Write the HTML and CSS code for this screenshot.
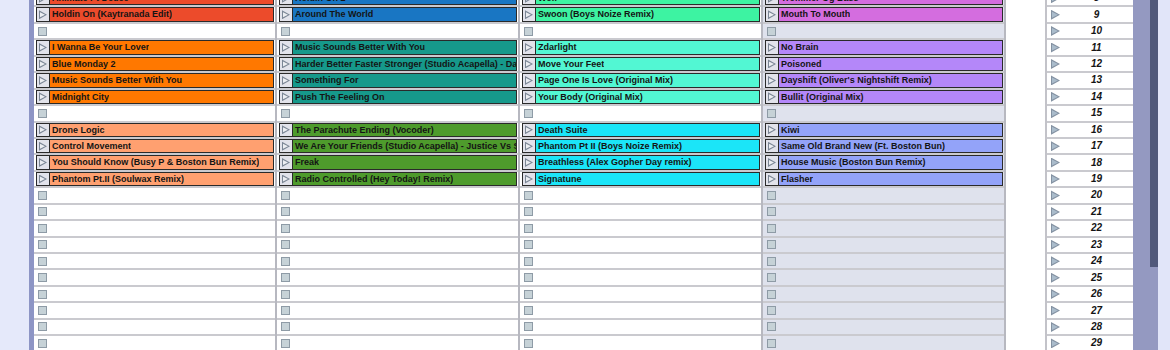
FILE: index.html
```html
<!DOCTYPE html>
<html>
<head>
    <title>Session View</title>
    <link rel="stylesheet" href="styles.css">
</head>
<body>
    <div class="strip"></div>

    <div class="session">
        <!-- track 1 -->
        <div class="track">
            <div class="slot"><div class="clip c-red"><span class="play"></span><span class="name">Animate Pt Deuce</span></div></div>
            <div class="slot"><div class="clip c-red"><span class="play"></span><span class="name">Holdin On (Kaytranada Edit)</span></div></div>
            <div class="slot"><span class="stop"></span></div>
            <div class="slot"><div class="clip c-orange"><span class="play"></span><span class="name">I Wanna Be Your Lover</span></div></div>
            <div class="slot"><div class="clip c-orange"><span class="play"></span><span class="name">Blue Monday 2</span></div></div>
            <div class="slot"><div class="clip c-orange"><span class="play"></span><span class="name">Music Sounds Better With You</span></div></div>
            <div class="slot"><div class="clip c-orange"><span class="play"></span><span class="name">Midnight City</span></div></div>
            <div class="slot"><span class="stop"></span></div>
            <div class="slot"><div class="clip c-salmon"><span class="play"></span><span class="name">Drone Logic</span></div></div>
            <div class="slot"><div class="clip c-salmon"><span class="play"></span><span class="name">Control Movement</span></div></div>
            <div class="slot"><div class="clip c-salmon"><span class="play"></span><span class="name">You Should Know (Busy P &amp; Boston Bun Remix)</span></div></div>
            <div class="slot"><div class="clip c-salmon"><span class="play"></span><span class="name">Phantom Pt.II (Soulwax Remix)</span></div></div>
            <div class="slot"><span class="stop"></span></div>
            <div class="slot"><span class="stop"></span></div>
            <div class="slot"><span class="stop"></span></div>
            <div class="slot"><span class="stop"></span></div>
            <div class="slot"><span class="stop"></span></div>
            <div class="slot"><span class="stop"></span></div>
            <div class="slot"><span class="stop"></span></div>
            <div class="slot"><span class="stop"></span></div>
            <div class="slot"><span class="stop"></span></div>
            <div class="slot"><span class="stop"></span></div>
        </div>

        <!-- track 2 -->
        <div class="track">
            <div class="slot"><div class="clip c-blue"><span class="play"></span><span class="name">Holdin On 2</span></div></div>
            <div class="slot"><div class="clip c-blue"><span class="play"></span><span class="name">Around The World</span></div></div>
            <div class="slot"><span class="stop"></span></div>
            <div class="slot"><div class="clip c-teal"><span class="play"></span><span class="name">Music Sounds Better With You</span></div></div>
            <div class="slot"><div class="clip c-teal"><span class="play"></span><span class="name">Harder Better Faster Stronger (Studio Acapella) - Daft Punk</span></div></div>
            <div class="slot"><div class="clip c-teal"><span class="play"></span><span class="name">Something For</span></div></div>
            <div class="slot"><div class="clip c-teal"><span class="play"></span><span class="name">Push The Feeling On</span></div></div>
            <div class="slot"><span class="stop"></span></div>
            <div class="slot"><div class="clip c-green"><span class="play"></span><span class="name">The Parachute Ending (Vocoder)</span></div></div>
            <div class="slot"><div class="clip c-green"><span class="play"></span><span class="name">We Are Your Friends (Studio Acapella) - Justice Vs Simian</span></div></div>
            <div class="slot"><div class="clip c-green"><span class="play"></span><span class="name">Freak</span></div></div>
            <div class="slot"><div class="clip c-green"><span class="play"></span><span class="name">Radio Controlled (Hey Today! Remix)</span></div></div>
            <div class="slot"><span class="stop"></span></div>
            <div class="slot"><span class="stop"></span></div>
            <div class="slot"><span class="stop"></span></div>
            <div class="slot"><span class="stop"></span></div>
            <div class="slot"><span class="stop"></span></div>
            <div class="slot"><span class="stop"></span></div>
            <div class="slot"><span class="stop"></span></div>
            <div class="slot"><span class="stop"></span></div>
            <div class="slot"><span class="stop"></span></div>
            <div class="slot"><span class="stop"></span></div>
        </div>

        <!-- track 3 -->
        <div class="track">
            <div class="slot"><div class="clip c-mint"><span class="play"></span><span class="name">Wolf</span></div></div>
            <div class="slot"><div class="clip c-mint"><span class="play"></span><span class="name">Swoon (Boys Noize Remix)</span></div></div>
            <div class="slot"><span class="stop"></span></div>
            <div class="slot"><div class="clip c-aqua"><span class="play"></span><span class="name">Zdarlight</span></div></div>
            <div class="slot"><div class="clip c-aqua"><span class="play"></span><span class="name">Move Your Feet</span></div></div>
            <div class="slot"><div class="clip c-aqua"><span class="play"></span><span class="name">Page One Is Love (Original Mix)</span></div></div>
            <div class="slot"><div class="clip c-aqua"><span class="play"></span><span class="name">Your Body (Original Mix)</span></div></div>
            <div class="slot"><span class="stop"></span></div>
            <div class="slot"><div class="clip c-cyan"><span class="play"></span><span class="name">Death Suite</span></div></div>
            <div class="slot"><div class="clip c-cyan"><span class="play"></span><span class="name">Phantom Pt II (Boys Noize Remix)</span></div></div>
            <div class="slot"><div class="clip c-cyan"><span class="play"></span><span class="name">Breathless (Alex Gopher Day remix)</span></div></div>
            <div class="slot"><div class="clip c-cyan"><span class="play"></span><span class="name">Signatune</span></div></div>
            <div class="slot"><span class="stop"></span></div>
            <div class="slot"><span class="stop"></span></div>
            <div class="slot"><span class="stop"></span></div>
            <div class="slot"><span class="stop"></span></div>
            <div class="slot"><span class="stop"></span></div>
            <div class="slot"><span class="stop"></span></div>
            <div class="slot"><span class="stop"></span></div>
            <div class="slot"><span class="stop"></span></div>
            <div class="slot"><span class="stop"></span></div>
            <div class="slot"><span class="stop"></span></div>
        </div>

        <!-- track 4 -->
        <div class="track dim">
            <div class="slot"><div class="clip c-pink"><span class="play"></span><span class="name">Trommer Og Bass</span></div></div>
            <div class="slot"><div class="clip c-pink"><span class="play"></span><span class="name">Mouth To Mouth</span></div></div>
            <div class="slot"><span class="stop"></span></div>
            <div class="slot"><div class="clip c-violet"><span class="play"></span><span class="name">No Brain</span></div></div>
            <div class="slot"><div class="clip c-violet"><span class="play"></span><span class="name">Poisoned</span></div></div>
            <div class="slot"><div class="clip c-violet"><span class="play"></span><span class="name">Dayshift (Oliver's Nightshift Remix)</span></div></div>
            <div class="slot"><div class="clip c-violet"><span class="play"></span><span class="name">Bullit (Original Mix)</span></div></div>
            <div class="slot"><span class="stop"></span></div>
            <div class="slot"><div class="clip c-peri"><span class="play"></span><span class="name">Kiwi</span></div></div>
            <div class="slot"><div class="clip c-peri"><span class="play"></span><span class="name">Same Old Brand New (Ft. Boston Bun)</span></div></div>
            <div class="slot"><div class="clip c-peri"><span class="play"></span><span class="name">House Music (Boston Bun Remix)</span></div></div>
            <div class="slot"><div class="clip c-peri"><span class="play"></span><span class="name">Flasher</span></div></div>
            <div class="slot"><span class="stop"></span></div>
            <div class="slot"><span class="stop"></span></div>
            <div class="slot"><span class="stop"></span></div>
            <div class="slot"><span class="stop"></span></div>
            <div class="slot"><span class="stop"></span></div>
            <div class="slot"><span class="stop"></span></div>
            <div class="slot"><span class="stop"></span></div>
            <div class="slot"><span class="stop"></span></div>
            <div class="slot"><span class="stop"></span></div>
            <div class="slot"><span class="stop"></span></div>
        </div>

        <div class="gap"></div>

        <!-- master / scenes -->
        <div class="master">
            <div class="scene"><span class="launch"></span><span class="num">8</span></div>
            <div class="scene"><span class="launch"></span><span class="num">9</span></div>
            <div class="scene"><span class="launch"></span><span class="num">10</span></div>
            <div class="scene"><span class="launch"></span><span class="num">11</span></div>
            <div class="scene"><span class="launch"></span><span class="num">12</span></div>
            <div class="scene"><span class="launch"></span><span class="num">13</span></div>
            <div class="scene"><span class="launch"></span><span class="num">14</span></div>
            <div class="scene"><span class="launch"></span><span class="num">15</span></div>
            <div class="scene"><span class="launch"></span><span class="num">16</span></div>
            <div class="scene"><span class="launch"></span><span class="num">17</span></div>
            <div class="scene"><span class="launch"></span><span class="num">18</span></div>
            <div class="scene"><span class="launch"></span><span class="num">19</span></div>
            <div class="scene"><span class="launch"></span><span class="num">20</span></div>
            <div class="scene"><span class="launch"></span><span class="num">21</span></div>
            <div class="scene"><span class="launch"></span><span class="num">22</span></div>
            <div class="scene"><span class="launch"></span><span class="num">23</span></div>
            <div class="scene"><span class="launch"></span><span class="num">24</span></div>
            <div class="scene"><span class="launch"></span><span class="num">25</span></div>
            <div class="scene"><span class="launch"></span><span class="num">26</span></div>
            <div class="scene"><span class="launch"></span><span class="num">27</span></div>
            <div class="scene"><span class="launch"></span><span class="num">28</span></div>
            <div class="scene"><span class="launch"></span><span class="num">29</span></div>
        </div>
    </div>

    <div class="scrollbar"><div class="thumb"></div></div>
    <div class="edge"></div>
</body>
</html>
```

FILE: styles.css
```css
body {
    margin: 0;
    width: 1170px;
    height: 350px;
    overflow: hidden;
    display: flex;
    background-color: #ffffff;
    font-family: "Liberation Sans", Arial, sans-serif;
    color: #141414;
}

.strip {
    flex: none;
    width: 29px;
    background-color: #e5e9fa;
    border-right: 5px solid #8d95c5;
}

.session {
    flex: none;
    display: flex;
    align-self: flex-start;
    margin-top: -9px;
}

.track {
    width: 241px;
    border-right: 2px solid #b7b8c0;
    background-color: #ffffff;
}
.track.dim {
    background-color: #dfe2ed;
}

.slot {
    height: 16.45px;
    box-sizing: border-box;
    border-bottom: 2px solid #cacacf;
    padding: 0 1px 0 2px;
    display: flex;
    align-items: center;
}

.stop {
    width: 9px;
    height: 9px;
    box-sizing: border-box;
    margin-left: 2px;
    border: 1px solid #8e9ba6;
    background-color: #c6d2d7;
}

.clip {
    flex: 1;
    min-width: 0;
    height: 100%;
    box-sizing: border-box;
    border: 1px solid #2a2a2a;
    display: flex;
}

.play {
    flex: none;
    width: 12px;
    background-color: #e2e3eb;
    border-right: 1px solid #2a2a2a;
    display: grid;
    place-items: center;
}
.play::before,
.play::after {
    content: "";
    grid-area: 1 / 1;
    width: 8px;
    height: 9px;
}
.play::before {
    background-color: #7b8695;
    clip-path: polygon(0 0, 100% 50%, 0 100%);
}
.play::after {
    background-color: #eceef2;
    clip-path: polygon(1px 2px, 6px 4.5px, 1px 7px);
}

.name {
    padding-left: 2px;
    font-size: 9px;
    font-weight: bold;
    line-height: 12px;
    white-space: nowrap;
    overflow: hidden;
}

.c-red { background-color: #ec4b2b; }
.c-orange { background-color: #ff7800; }
.c-salmon { background-color: #ffa070; }
.c-blue { background-color: #1976c3; }
.c-teal { background-color: #16998b; }
.c-green { background-color: #4e9b2c; }
.c-mint { background-color: #3df3a2; }
.c-aqua { background-color: #52f7d3; }
.c-cyan { background-color: #1be5f8; }
.c-pink { background-color: #d46ddf; }
.c-violet { background-color: #b487f9; }
.c-peri { background-color: #93a3f9; }

.gap {
    width: 39px;
    border-right: 2px solid #c3c3c9;
    background-color: #ffffff;
}

.master {
    width: 86px;
    background-color: #ffffff;
}

.scene {
    height: 16.45px;
    box-sizing: border-box;
    border-bottom: 2px solid #cacacf;
    padding-left: 4px;
    display: flex;
    align-items: center;
}

.launch {
    flex: none;
    width: 9px;
    height: 10px;
    display: grid;
}
.launch::before,
.launch::after {
    content: "";
    grid-area: 1 / 1;
}
.launch::before {
    background-color: #8492a2;
    clip-path: polygon(0 0, 100% 50%, 0 100%);
}
.launch::after {
    background-color: #aabccb;
    clip-path: polygon(1px 2px, 7px 5px, 1px 8px);
}

.num {
    flex: 1;
    text-align: center;
    font-size: 10px;
    font-weight: bold;
    font-style: italic;
    line-height: 12px;
}

.scrollbar {
    flex: none;
    width: 8px;
    padding-left: 17px;
    background-color: #9499c1;
}
.thumb {
    height: 267px;
    background-color: #51597b;
}

.edge {
    flex: none;
    width: 12px;
    background-color: #e1e5f9;
}
```
